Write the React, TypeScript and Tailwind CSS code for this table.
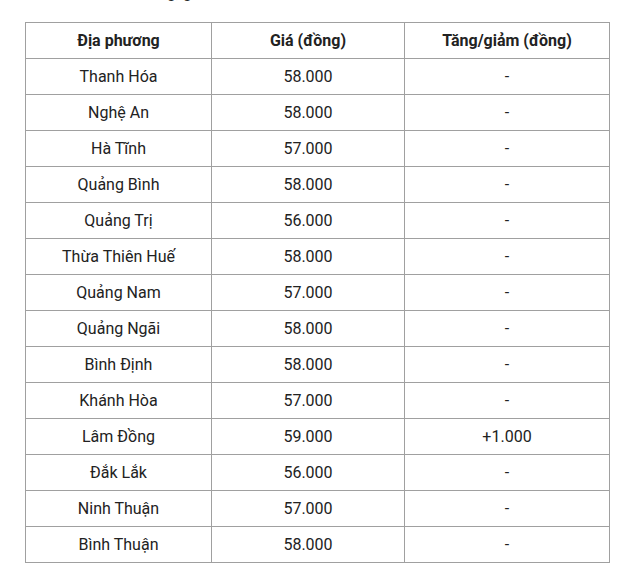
const rows: [string, string, string][] = [
  ["Thanh Hóa", "58.000", "-"],
  ["Nghệ An", "58.000", "-"],
  ["Hà Tĩnh", "57.000", "-"],
  ["Quảng Bình", "58.000", "-"],
  ["Quảng Trị", "56.000", "-"],
  ["Thừa Thiên Huế", "58.000", "-"],
  ["Quảng Nam", "57.000", "-"],
  ["Quảng Ngãi", "58.000", "-"],
  ["Bình Định", "58.000", "-"],
  ["Khánh Hòa", "57.000", "-"],
  ["Lâm Đồng", "59.000", "+1.000"],
  ["Đắk Lắk", "56.000", "-"],
  ["Ninh Thuận", "57.000", "-"],
  ["Bình Thuận", "58.000", "-"],
];

export default function App() {
  return (
    <div className="h-[580px] w-[643px] overflow-hidden bg-white font-['Roboto',sans-serif] text-[16px] text-[#222]">
      {/* caption line above the table, scrolled mostly out of view */}
      <p className="-mt-[19px] h-[41px] pl-[96px] leading-[24px]">
        Miền Trung, giá heo hơi
      </p>
      <table className="ml-[25px] w-[585px] table-fixed border-collapse text-center">
        <colgroup>
          <col className="w-[186px]" />
          <col className="w-[193px]" />
          <col />
        </colgroup>
        <thead>
          <tr className="h-[36px]">
            <th className="border border-[#a0a0a0] font-bold">Địa phương</th>
            <th className="border border-[#a0a0a0] font-bold">Giá (đồng)</th>
            <th className="border border-[#a0a0a0] font-bold">Tăng/giảm (đồng)</th>
          </tr>
        </thead>
        <tbody>
          {rows.map(([place, price, diff]) => (
            <tr key={place} className="h-[36px]">
              <td className="border border-[#a0a0a0]">{place}</td>
              <td className="border border-[#a0a0a0]">{price}</td>
              <td className="border border-[#a0a0a0]">{diff}</td>
            </tr>
          ))}
        </tbody>
      </table>
    </div>
  );
}
